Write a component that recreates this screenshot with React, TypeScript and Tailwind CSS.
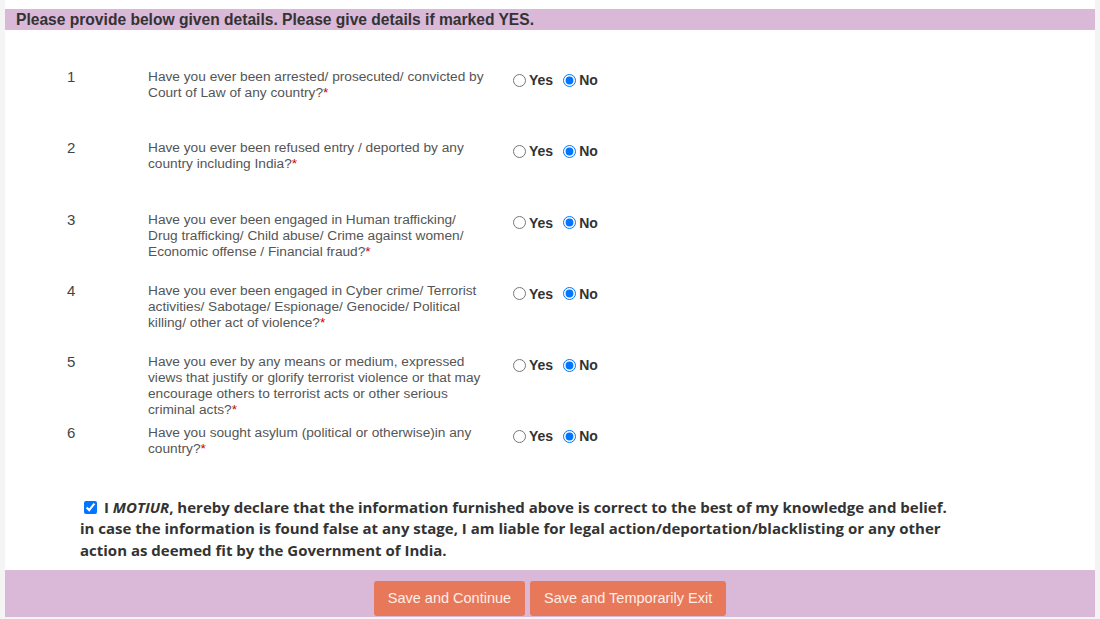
import React from 'react';

const questions: string[] = [
  'Have you ever been arrested/ prosecuted/ convicted by Court of Law of any country?',
  'Have you ever been refused entry / deported by any country including India?',
  'Have you ever been engaged in Human trafficking/ Drug trafficking/ Child abuse/ Crime against women/ Economic offense / Financial fraud?',
  'Have you ever been engaged in Cyber crime/ Terrorist activities/ Sabotage/ Espionage/ Genocide/ Political killing/ other act of violence?',
  'Have you ever by any means or medium, expressed views that justify or glorify terrorist violence or that may encourage others to terrorist acts or other serious criminal acts?',
  'Have you sought asylum (political or otherwise)in any country?',
];

const QuestionRow: React.FC<{ n: number; text: string }> = ({ n, text }) => (
  <div className="flex h-[71.3px] items-start">
    <div className="w-[143px] shrink-0 pl-[62px] text-[15px] leading-4 text-[#444]">{n}</div>
    <div className="w-[360px] shrink-0 pr-[20px] text-[13.7px] leading-4 text-[#555]">
      {text}
      <span className="text-[#c00]">*</span>
    </div>
    <div className="flex items-center pt-[3px] text-[14px] font-bold leading-4 text-[#333]">
      <label className="flex items-center">
        <input type="radio" name={`q${n}`} className="m-0 ml-[5px] mr-[3px] h-[13px] w-[13px]" />
        Yes
      </label>
      <label className="ml-[3px] flex items-center">
        <input type="radio" name={`q${n}`} defaultChecked className="m-0 ml-[7px] mr-[3px] h-[13px] w-[13px]" />
        No
      </label>
    </div>
  </div>
);

export default function App() {
  return (
    <div className="min-h-[619px] bg-[#f4f4f4] font-['Liberation_Sans',Arial,sans-serif]">
      <div className="mx-[5px] bg-white pt-[9px]">
        {/* header strip */}
        <div className="h-[21px] bg-[#d9b8d8] pl-[11px] text-[15.6px] font-bold leading-[21px] text-[#333]">
          Please provide below given details. Please give details if marked YES.
        </div>

        {/* questions */}
        <div className="pt-[39px]">
          {questions.map((q, i) => (
            <QuestionRow key={i} n={i + 1} text={q} />
          ))}
        </div>

        {/* declaration */}
        <div className="pl-[75px] pr-[140px] pb-[9px] font-['Open_Sans',Arial,sans-serif] text-[15px] font-bold leading-[21.5px] text-[#333]">
          <input type="checkbox" defaultChecked className="mb-[3px] ml-[4px] mr-[3px] mt-[3px] h-[13px] w-[13px] align-[-1px]" />{' '}
          I <i>MOTIUR</i>, hereby declare that the information furnished above is correct to the best of my knowledge and belief.
          in case the information is found false at any stage, I am liable for legal action/deportation/blacklisting or any other
          action as deemed fit by the Government of India.
        </div>

        {/* actions */}
        <div className="flex h-[47px] justify-center gap-[5px] bg-[#d9b8d8] pt-[11px]">
          <button className="h-[35px] rounded-[3px] bg-[#e8785a] px-[14px] text-[14.5px] text-[#fdeee8]">
            Save and Continue
          </button>
          <button className="h-[35px] rounded-[3px] bg-[#e8785a] px-[14px] text-[14.5px] text-[#fdeee8]">
            Save and Temporarily Exit
          </button>
        </div>
      </div>
    </div>
  );
}
